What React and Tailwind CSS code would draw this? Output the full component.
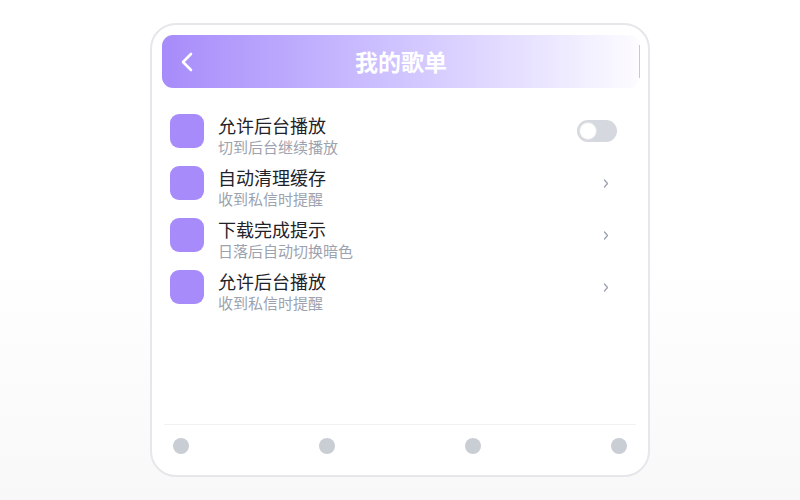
import React from "react";

const rows = [
  { title: "允许后台播放", sub: "切到后台继续播放", toggle: true },
  { title: "自动清理缓存", sub: "收到私信时提醒" },
  { title: "下载完成提示", sub: "日落后自动切换暗色" },
  { title: "允许后台播放", sub: "收到私信时提醒" },
];

export default function App() {
  return (
    <div
      className="w-[800px] h-[500px] bg-gradient-to-b from-white from-50% to-[#f8f8f9] flex items-center justify-center"
      style={{ fontFamily: '"Noto Sans CJK SC", "Noto Sans", sans-serif' }}
    >
      <div className="w-[500px] h-[454px] bg-white border-2 border-[#e6e7eb] rounded-[26px] p-2.5 flex flex-col">
        <div className="relative h-[53px] -mr-0.5 rounded-[11px] bg-gradient-to-r from-[#a78bfa] to-[#fdfcff] flex items-center">
          <svg width="14" height="20" viewBox="0 0 14 20" className="ml-[18px]">
            <path d="M11 2 L3 10 L11 18" fill="none" stroke="white" strokeWidth="2.6" strokeLinecap="round" strokeLinejoin="round" />
          </svg>
          <div className="absolute inset-0 flex items-center justify-center text-white text-[23px] font-bold">
            我的歌单
          </div>
          <div className="absolute right-0 top-[10px] bottom-[10px] w-px bg-[#cbbff7]" />
        </div>

        <div className="mt-[26px] px-2 flex flex-col">
          {rows.map((r, i) => (
            <div key={i} className="h-[52px] flex items-start">
              <div className="w-[34px] h-[34px] rounded-[9px] bg-[#a78bfa] shrink-0" />
              <div className="ml-[14px] flex-1 flex flex-col">
                <div className="text-[18px] leading-[22px] text-[#1f2329]">{r.title}</div>
                <div className="text-[15px] leading-[20px] text-[#9ca3af] mt-px">{r.sub}</div>
              </div>
              <div className="h-[34px] w-10 mr-[13px] flex items-center justify-end">
                {r.toggle ? (
                  <div className="w-10 h-[22px] rounded-full bg-[#d5d8de] flex items-center px-[2px]">
                    <div className="w-[18px] h-[18px] rounded-full bg-white border border-[#e2e4e8]" />
                  </div>
                ) : (
                  <svg width="6" height="9" viewBox="0 0 6 9" className="mr-2">
                    <path d="M1.5 1 L4.5 4.5 L1.5 8" fill="none" stroke="#9ca3af" strokeWidth="1.3" strokeLinecap="round" strokeLinejoin="round" />
                  </svg>
                )}
              </div>
            </div>
          ))}
        </div>

        <div className="flex-1" />

        <div className="mx-0.5 border-t border-[#f0f1f3] pt-[13px] pb-[11px] px-[9px] flex justify-between">
          {[0, 1, 2, 3].map((i) => (
            <div key={i} className="w-4 h-4 rounded-full bg-[#c9cdd4]" />
          ))}
        </div>
      </div>
    </div>
  );
}
